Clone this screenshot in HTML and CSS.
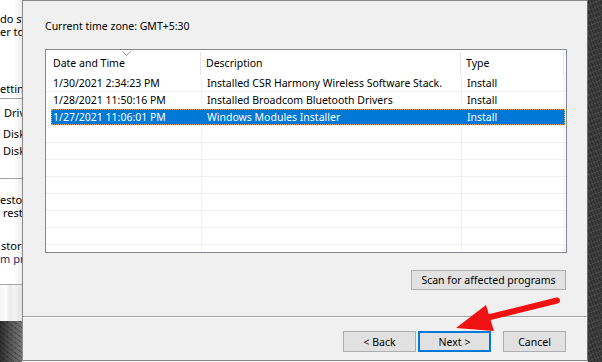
FILE: index.html
```html
<!DOCTYPE html>
<html lang="en">
<head>
  <meta charset="UTF-8" />
  <meta name="viewport" content="width=device-width, initial-scale=1.0"/>
  <title>System Restore</title>
  <link rel="stylesheet" href="styles.css">
</head>
<body>
  <div class="screen">
    <!-- janela de fundo, cortada a esquerda -->
    <div class="bg-window">
      <div class="bg-top">
        <div class="bg-line">do sy</div>
        <div class="bg-line">er to</div>
        <div class="bg-line bg-settings">etting</div>
      </div>
      <div class="bg-drives">
        <div class="bg-line bg-drive">Driv</div>
        <div class="bg-line bg-disk1">Disk</div>
        <div class="bg-line bg-disk2">Disk</div>
      </div>
      <div class="bg-restore">
        <div class="bg-line">estor</div>
        <div class="bg-line bg-indent">resto</div>
        <div class="bg-line bg-gap">store</div>
        <div class="bg-line bg-link">m pr</div>
      </div>
      <div class="bg-bar"></div>
      <div class="bg-desk"></div>
    </div>

    <div class="dialog">
      <p class="tz">Current time zone: GMT+5:30</p>

      <div class="list">
        <div class="list-head">
          <span class="pad"></span>
          <span class="hcell c1">Date and Time
            <svg class="sort" width="9" height="5" viewBox="0 0 9 5"><polyline points="0.5,0.5 4.5,4.5 8.5,0.5" fill="none" stroke="#9a9a9a" stroke-width="1"/></svg>
          </span>
          <span class="hcell c2">Description</span>
          <span class="hcell c3">Type</span>
        </div>
        <div class="rows">
          <div class="row">
            <span class="pad"></span>
            <span class="cell c1">1/30/2021 2:34:23 PM</span>
            <span class="cell c2">Installed CSR Harmony Wireless Software Stack.</span>
            <span class="cell c3">Install</span>
          </div>
          <div class="row">
            <span class="pad"></span>
            <span class="cell c1">1/28/2021 11:50:16 PM</span>
            <span class="cell c2">Installed Broadcom Bluetooth Drivers</span>
            <span class="cell c3">Install</span>
          </div>
          <div class="row sel">
            <span class="pad"></span>
            <span class="cell c1">1/27/2021 11:06:01 PM</span>
            <span class="cell c2">Windows Modules Installer</span>
            <span class="cell c3">Install</span>
          </div>
          <div class="row"></div>
          <div class="row"></div>
          <div class="row"></div>
          <div class="row"></div>
          <div class="row"></div>
          <div class="row"></div>
          <div class="row"></div>
        </div>
      </div>

      <div class="scan-row">
        <button class="btn btn-scan">Scan for affected programs</button>
      </div>

      <div class="sep"></div>

      <div class="footer">
        <button class="btn btn-back">&lt; Back</button>
        <button class="btn btn-next">Next &gt;</button>
        <button class="btn btn-cancel">Cancel</button>
      </div>
    </div>

    <div class="desktop"></div>

    <!-- seta vermelha de anotacao -->
    <svg class="arrow" width="602" height="362" viewBox="0 0 602 362">
      <line x1="557" y1="300.5" x2="482" y2="319" stroke="#f01212" stroke-width="6" stroke-linecap="round"/>
      <polygon points="456,328 486,305 494,331" fill="#f01212"/>
    </svg>
  </div>
</body>
</html>
```

FILE: styles.css
```css
body {
  margin: 0;
  font-family: "Noto Sans", Arial, sans-serif;
  font-size: 10.5px;
  color: #000;
  background: #f0f0f0;
}

.screen {
  position: relative;
  display: flex;
  width: 602px;
  height: 362px;
  overflow: hidden;
}

/* janela de fundo */
.bg-window {
  width: 22px;
  flex-shrink: 0;
  display: flex;
  flex-direction: column;
  overflow: hidden;
  white-space: nowrap;
  font-size: 11px;
  background: linear-gradient(90deg, #fff 0, #fff 14px, #ececec 22px);
}

.bg-line {
  height: 13px;
  line-height: 13px;
  overflow: hidden;
}

.bg-top {
  height: 99px;
  padding-top: 12px;
  box-sizing: border-box;
  border-bottom: 1px solid #a0a0a0;
}

.bg-settings {
  margin-top: 44px;
}

.bg-drives {
  height: 79px;
  border-bottom: 1px solid #a0a0a0;
}

.bg-drive {
  margin-top: 7px;
  padding-left: 4px;
}

.bg-disk1 {
  margin-top: 8px;
  padding-left: 3px;
}

.bg-disk2 {
  margin-top: 4px;
  padding-left: 3px;
}

.bg-restore {
  height: 106px;
  padding-top: 14px;
  box-sizing: border-box;
  border-bottom: 1px solid #a8a8a8;
}

.bg-indent {
  padding-left: 3px;
}

.bg-gap {
  margin-top: 20px;
  padding-left: 1px;
}

.bg-link {
  color: #1a2a6a;
}

.bg-bar {
  height: 36px;
  background: linear-gradient(90deg, #f6f6f6 0, #fdfdfd 6px, #e9e9e9 10px, #f4f4f4 14px, #e2e2e2 22px);
}

.bg-desk {
  flex: 1;
  background:
    repeating-linear-gradient(37deg, rgba(0,0,0,0.25) 0 1px, transparent 1px 4px),
    linear-gradient(90deg, #2e2e2e, #555 50%, #777);
}

/* dialogo */
.dialog {
  width: 566px;
  height: 361px;
  flex-shrink: 0;
  box-sizing: border-box;
  border: 1px solid #8a8a8a;
  border-right-color: #6e6e6e;
  background: #f0f0f0;
  padding: 17px 20px 0 22px;
  display: flex;
  flex-direction: column;
}

.tz {
  margin: 0;
  line-height: 16px;
}

.list {
  margin-top: 15px;
  height: 204px;
  box-sizing: border-box;
  border: 1px solid #828790;
  background: #fff;
  display: flex;
  flex-direction: column;
}

.list-head,
.row {
  display: grid;
  grid-template-columns: 5px 150px 260px 103px 1px;
}

.list-head {
  height: 25px;
  line-height: 25px;
}

.hcell {
  position: relative;
  box-sizing: border-box;
  border-right: 1px solid #e5e5e5;
  margin-top: 2px;
  line-height: 23px;
}

.hcell.c1 {
  padding-left: 2px;
}

.hcell.c2 {
  margin-left: -1px;
  padding-left: 6px;
}

.hcell.c3 {
  padding-left: 5px;
}

.sort {
  position: absolute;
  left: 71px;
  top: -1px;
}

.rows {
  flex: 1;
  background:
    linear-gradient(90deg,
      transparent 155px, #f0f0f0 155px, #f0f0f0 156px,
      transparent 156px, transparent 415px, #f0f0f0 415px, #f0f0f0 416px,
      transparent 416px, transparent 518px, #f0f0f0 518px, #f0f0f0 519px,
      transparent 519px);
}

.row {
  position: relative;
  height: 17px;
  box-sizing: border-box;
  border-bottom: 1px solid #f0f0f0;
  line-height: 17px;
}

.cell {
  white-space: nowrap;
  overflow: hidden;
}

.cell.c1 {
  padding-left: 2px;
}

.cell.c2,
.cell.c3 {
  padding-left: 6px;
}

.row.sel {
  color: #fff;
  background: linear-gradient(90deg, transparent 5px, #0078d7 5px, #0078d7 519px, transparent 519px);
}

.row.sel::after {
  content: "";
  position: absolute;
  left: 5px;
  top: 0;
  width: 514px;
  height: 16px;
  box-sizing: border-box;
  border: 1px dotted #e9a45a;
}

/* botoes */
.btn {
  font-family: "Noto Sans", Arial, sans-serif;
  font-size: 10.5px;
  color: #000;
  background: #e1e1e1;
  border: 1px solid #adadad;
  padding: 0;
  box-sizing: border-box;
}

.scan-row {
  margin-top: 17px;
  display: flex;
  justify-content: flex-end;
  padding-right: 1px;
}

.btn-scan {
  width: 155px;
  height: 20px;
}

.sep {
  margin: 26px -20px 0 -22px;
  height: 0;
  border-top: 1px solid #a0a0a0;
  border-bottom: 1px solid #fff;
}

.footer {
  padding-top: 13px;
  padding-right: 1px;
  display: flex;
  justify-content: flex-end;
}

.btn-back,
.btn-next {
  width: 73px;
  height: 21px;
}

.btn-next {
  margin-left: 2px;
  border: 2px solid #0078d7;
}

.btn-cancel {
  width: 63px;
  height: 21px;
  margin-left: 12px;
}

.desktop {
  flex: 1;
  background:
    repeating-linear-gradient(70deg, rgba(0,0,0,0.22) 0 1px, transparent 1px 3px),
    repeating-linear-gradient(-20deg, rgba(255,255,255,0.08) 0 1px, transparent 1px 5px),
    #3c3c3c;
}

.arrow {
  position: absolute;
  left: 0;
  top: 0;
  pointer-events: none;
}
```
